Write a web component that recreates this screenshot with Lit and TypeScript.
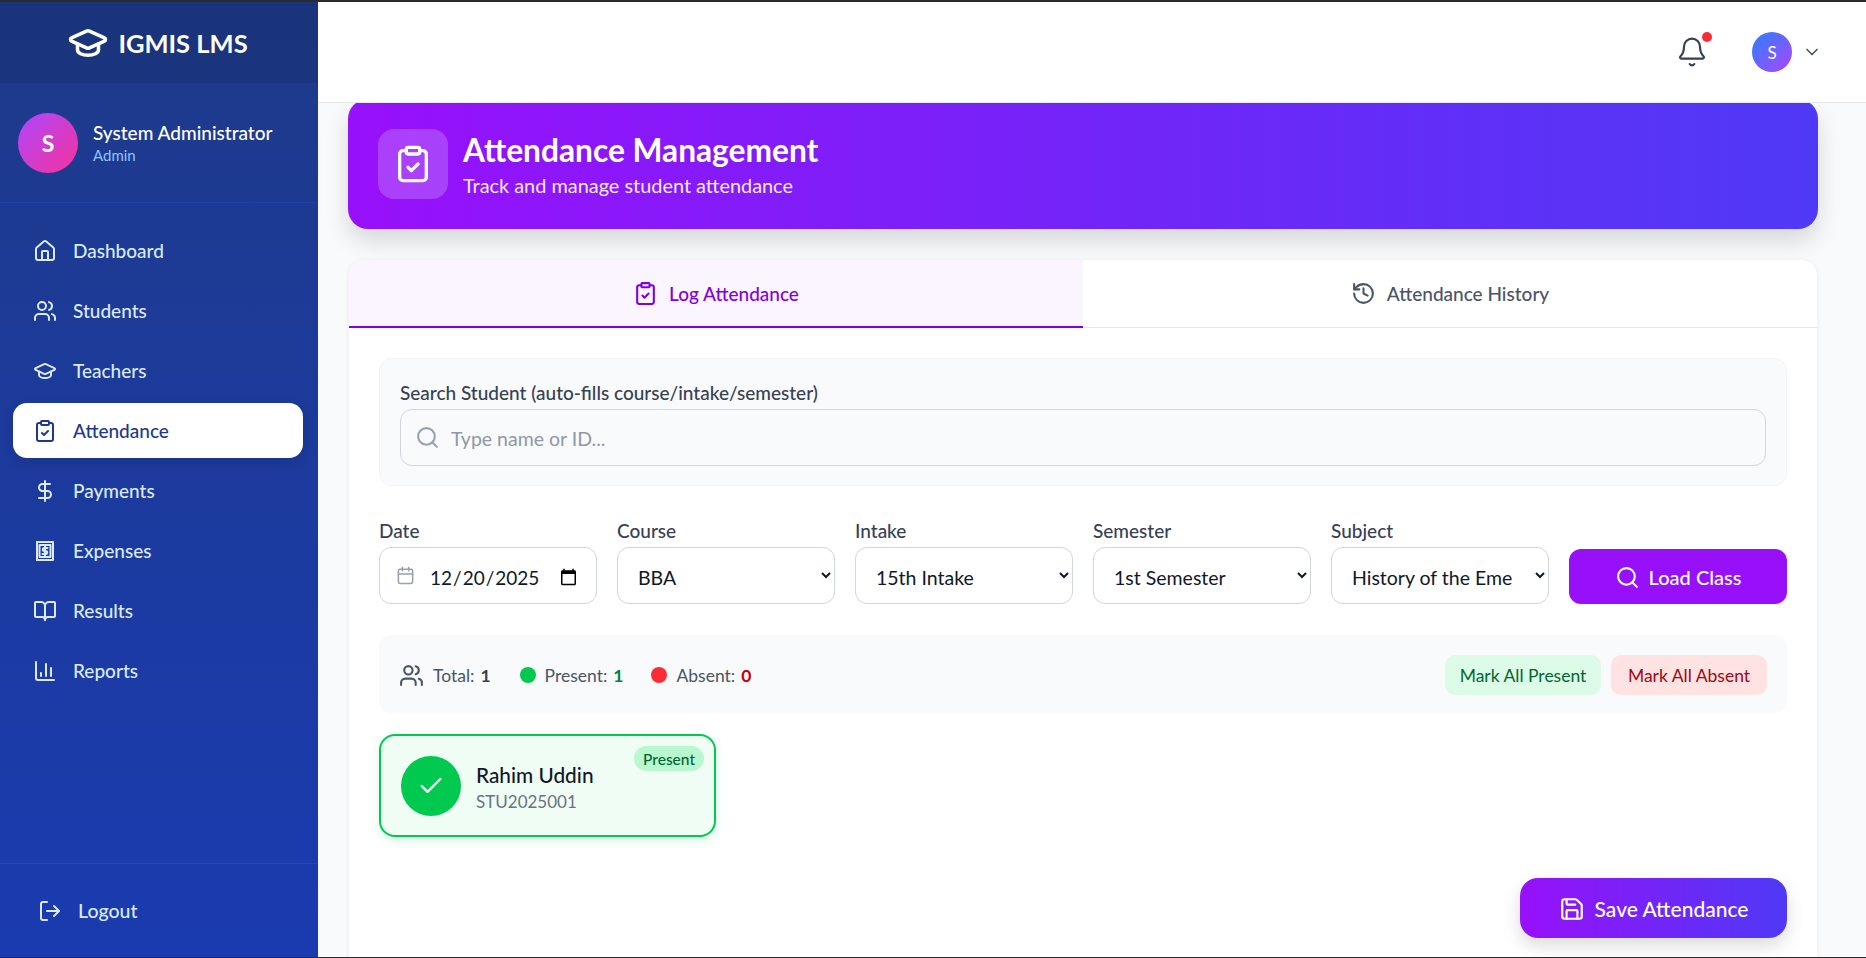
import { LitElement, html, css, svg } from 'lit';
import { customElement } from 'lit/decorators.js';

const ICONS: Record<string, unknown> = {
  house: svg`<path d="M15 21v-8a1 1 0 0 0-1-1h-4a1 1 0 0 0-1 1v8"/><path d="M3 10a2 2 0 0 1 .709-1.528l7-5.999a2 2 0 0 1 2.582 0l7 5.999A2 2 0 0 1 21 10v9a2 2 0 0 1-2 2H5a2 2 0 0 1-2-2z"/>`,
  users: svg`<path d="M16 21v-2a4 4 0 0 0-4-4H6a4 4 0 0 0-4 4v2"/><circle cx="9" cy="7" r="4"/><path d="M22 21v-2a4 4 0 0 0-3-3.87"/><path d="M16 3.13a4 4 0 0 1 0 7.75"/>`,
  cap: svg`<path d="M21.42 10.922a1 1 0 0 0-.019-1.838L12.83 5.18a2 2 0 0 0-1.66 0L2.6 9.08a1 1 0 0 0 0 1.832l8.57 3.908a2 2 0 0 0 1.66 0z"/><path d="M6 12.5V16a6 3 0 0 0 12 0v-3.5"/>`,
  clipboard: svg`<rect x="8" y="2" width="8" height="4" rx="1"/><path d="M16 4h2a2 2 0 0 1 2 2v14a2 2 0 0 1-2 2H6a2 2 0 0 1-2-2V6a2 2 0 0 1 2-2h2"/><path d="m9 14 2 2 4-4"/>`,
  dollar: svg`<line x1="12" x2="12" y1="2" y2="22"/><path d="M17 5H9.5a3.5 3.5 0 0 0 0 7h5a3.5 3.5 0 0 1 0 7H6"/>`,
  receipt: svg`<path d="M4 3v18M20 3v18"/><path d="M4 3h16M4 21h16" stroke-dasharray="1.5 1.2"/><rect x="6.5" y="6" width="11" height="12"/><path d="M14.5 9h-3.2a1.5 1.5 0 0 0 0 3h1.4a1.5 1.5 0 0 1 0 3H9.500M12 7.500v9"/>`,
  book: svg`<path d="M12 7v14"/><path d="M3 18a1 1 0 0 1-1-1V4a1 1 0 0 1 1-1h5a4 4 0 0 1 4 4 4 4 0 0 1 4-4h5a1 1 0 0 1 1 1v13a1 1 0 0 1-1 1h-6a3 3 0 0 0-3 3 3 3 0 0 0-3-3z"/>`,
  chart: svg`<path d="M3 3v16a2 2 0 0 0 2 2h16"/><path d="M18 17V9"/><path d="M13 17V5"/><path d="M8 17v-3"/>`,
  logout: svg`<path d="m16 17 5-5-5-5"/><path d="M21 12H9"/><path d="M9 21H5a2 2 0 0 1-2-2V5a2 2 0 0 1 2-2h4"/>`,
  bell: svg`<path d="M10.268 21a2 2 0 0 0 3.464 0"/><path d="M3.262 15.326A1 1 0 0 0 4 17h16a1 1 0 0 0 .74-1.673C19.41 13.956 18 12.499 18 8A6 6 0 0 0 6 8c0 4.499-1.411 5.956-2.738 7.326"/>`,
  chevron: svg`<path d="m6 9 6 6 6-6"/>`,
  history: svg`<path d="M3 12a9 9 0 1 0 9-9 9.750 9.750 0 0 0-6.740 2.740L3 8"/><path d="M3 3v5h5"/><path d="M12 7v5l4 2"/>`,
  search: svg`<circle cx="11" cy="11" r="8"/><path d="m21 21-4.300-4.300"/>`,
  calendar: svg`<path d="M8 2v4"/><path d="M16 2v4"/><rect x="3" y="4" width="18" height="18" rx="2"/><path d="M3 10h18"/>`,
  save: svg`<path d="M15.200 3a2 2 0 0 1 1.400.6l3.800 3.800a2 2 0 0 1 .6 1.400V19a2 2 0 0 1-2 2H5a2 2 0 0 1-2-2V5a2 2 0 0 1 2-2z"/><path d="M17 21v-7a1 1 0 0 0-1-1H8a1 1 0 0 0-1 1v7"/><path d="M7 3v4a1 1 0 0 0 1 1h7"/>`,
  check: svg`<path d="M20 6 9 17l-5-5"/>`,
};

const icon = (name: string, size: number, stroke = 2) => html`<svg
  width=${size}
  height=${size}
  viewBox="0 0 24 24"
  fill="none"
  stroke="currentColor"
  stroke-width=${stroke}
  stroke-linecap="round"
  stroke-linejoin="round"
>${ICONS[name]}</svg>`;

const NAV = [
  { name: 'Dashboard', icon: 'house' },
  { name: 'Students', icon: 'users' },
  { name: 'Teachers', icon: 'cap' },
  { name: 'Attendance', icon: 'clipboard', active: true },
  { name: 'Payments', icon: 'dollar' },
  { name: 'Expenses', icon: 'receipt' },
  { name: 'Results', icon: 'book' },
  { name: 'Reports', icon: 'chart' },
];

@customElement('app-root')
export class AppRoot extends LitElement {
  static styles = css`
    :host {
      display: flex;
      height: 958px;
      box-sizing: border-box;
      border-top: 2px solid #2b2b2b;
      border-bottom: 1px solid #2b2b2b;
      overflow: hidden;
      font-family: 'Lato', 'Noto Sans', sans-serif;
      background: #f9fafb;
    }
    * {
      box-sizing: border-box;
    }
    svg {
      flex: none;
      display: block;
    }

    .sidebar {
      width: 318px;
      flex: none;
      display: flex;
      flex-direction: column;
      background: linear-gradient(180deg, #1e3a8a, #1a3bb0);
      color: #fff;
    }
    .brand {
      height: 81px;
      display: flex;
      align-items: center;
      justify-content: center;
      gap: 9px;
      padding-right: 3px;
      background: rgba(0, 0, 0, 0.1);
      font-size: 25.5px;
      font-weight: 700;
    }
    .profile {
      height: 120px;
      display: flex;
      align-items: center;
      gap: 15px;
      padding: 0 18px;
      border-bottom: 1px solid #1e40af;
    }
    .profile .avatar {
      width: 60px;
      height: 60px;
      border-radius: 50%;
      background: linear-gradient(135deg, #ad46ff, #f6339a);
      display: flex;
      align-items: center;
      justify-content: center;
      font-size: 23px;
      font-weight: 700;
    }
    .profile .name {
      font-size: 19px;
      font-weight: 500;
      line-height: 24px;
    }
    .profile .role {
      font-size: 15px;
      line-height: 20px;
      color: #8ec5ff;
    }
    nav {
      flex: 1;
      display: flex;
      flex-direction: column;
      gap: 5px;
      padding: 20px 15px 20px 13px;
    }
    .item {
      height: 55px;
      display: flex;
      align-items: center;
      gap: 16px;
      padding: 0 20px;
      border-radius: 14px;
      font-size: 19px;
      font-weight: 500;
      color: #dbeafe;
    }
    .item.active {
      background: #fff;
      color: #1c398e;
      box-shadow: 0 4px 12px rgba(0, 0, 0, 0.12);
    }
    .logout {
      height: 94px;
      display: flex;
      align-items: center;
      gap: 16px;
      padding: 0 38px;
      border-top: 1px solid #1e4bb8;
      font-size: 19.5px;
      font-weight: 500;
      color: #dbeafe;
    }

    .main {
      flex: 1;
      min-width: 0;
      display: flex;
      flex-direction: column;
    }
    .topbar {
      height: 101px;
      flex: none;
      display: flex;
      align-items: center;
      justify-content: flex-end;
      padding-right: 44px;
      background: #fff;
      border-bottom: 1px solid #e5e7eb;
      position: relative;
      z-index: 2;
    }
    .bell {
      position: relative;
      color: #364153;
      margin-right: 44px;
    }
    .bell .dot {
      position: absolute;
      top: -4px;
      right: -4px;
      width: 10px;
      height: 10px;
      border-radius: 50%;
      background: #fb2c36;
    }
    .user-avatar {
      width: 40px;
      height: 40px;
      border-radius: 50%;
      background: linear-gradient(135deg, #2b7fff, #ad46ff);
      color: #fff;
      display: flex;
      align-items: center;
      justify-content: center;
      font-size: 17px;
    }
    .chevron {
      color: #4a5565;
      margin-left: 10px;
    }

    .content {
      flex: 1;
      min-height: 0;
      overflow: hidden;
      padding: 0 48px 0 30px;
    }
    .banner {
      margin-top: -4px;
      height: 130px;
      padding: 30px;
      display: flex;
      align-items: center;
      gap: 15px;
      color: #fff;
      border-radius: 20px;
      background: linear-gradient(90deg, #9810fa, #4f39f6);
      box-shadow: 0 12px 24px rgba(0, 0, 0, 0.14);
    }
    .banner .tile {
      width: 70px;
      height: 70px;
      border-radius: 16px;
      background: rgba(255, 255, 255, 0.2);
      display: flex;
      align-items: center;
      justify-content: center;
    }
    .banner h1 {
      margin: 1px 0 3px;
      font-size: 31.7px;
      line-height: 38px;
      font-weight: 700;
    }
    .banner p {
      margin: 0;
      font-size: 19.9px;
      line-height: 26px;
      color: #f3e8ff;
    }

    .card {
      margin-top: 30px;
      height: 800px;
      background: #fff;
      border-radius: 16px 16px 0 0;
      border: 1px solid #f3f4f6;
      box-shadow: 0 1px 4px rgba(0, 0, 0, 0.06);
      overflow: hidden;
    }
    .tabs {
      display: grid;
      grid-template-columns: 1fr 1fr;
      height: 68px;
      border-bottom: 1px solid #e5e7eb;
    }
    .tab {
      display: flex;
      align-items: center;
      justify-content: center;
      gap: 11px;
      font-size: 19px;
      font-weight: 500;
      color: #4a5565;
    }
    .tab.active {
      color: #8200db;
      background: #faf5ff;
      border-bottom: 2px solid #8200db;
      margin-bottom: -1px;
    }
    .body {
      padding: 30px;
    }
    .search-panel {
      height: 128px;
      padding: 21px 20px 0;
      background: #f9fafb;
      border: 1px solid #f3f4f6;
      border-radius: 12px;
    }
    label {
      display: block;
      font-size: 19px;
      font-weight: 500;
      line-height: 25px;
      margin-bottom: 4px;
      color: #364153;
    }
    .field {
      height: 57px;
      display: flex;
      align-items: center;
      border: 1px solid #d1d5dc;
      border-radius: 12px;
      background: #fff;
      padding: 0 20px;
      gap: 11px;
    }
    .search-panel .field {
      background: #f9fafb;
      padding: 0 14px;
      color: #99a1af;
    }
    .search-panel input {
      padding-top: 2px;
    }
    input,
    select {
      border: 0;
      outline: 0;
      background: transparent;
      font: inherit;
      font-size: 19.5px;
      color: #101828;
      width: 100%;
      min-width: 0;
      padding: 0;
    }
    input::placeholder {
      color: #8f98a6;
    }
    select {
      height: 100%;
      padding: 3px 20px 0 16px;
    }
    .filters {
      margin-top: 32px;
      display: grid;
      grid-template-columns: repeat(6, minmax(0, 1fr));
      gap: 20px;
      align-items: end;
    }
    .filters .select-field {
      padding: 0;
    }
    .filters .date-field {
      color: #99a1af;
      padding: 0 16px;
      gap: 14px;
    }
    .date-field input {
      font-size: 19px;
      padding-top: 3px;
    }
    .load {
      height: 55px;
      padding-top: 1px;
      border-radius: 12px;
      background: #9810fa;
      color: #fff;
      display: flex;
      align-items: center;
      justify-content: center;
      gap: 9px;
      font-size: 20px;
      font-weight: 500;
    }
    .stats {
      margin-top: 31px;
      height: 78px;
      padding: 2px 20px 0;
      display: flex;
      align-items: center;
      background: #f9fafb;
      border-radius: 12px;
      font-size: 17.5px;
      color: #4a5565;
    }
    .stat {
      display: flex;
      align-items: center;
      gap: 6px;
      margin-right: 28px;
    }
    .stat svg {
      margin-right: 3px;
    }
    .stat b {
      font-weight: 700;
      color: #364153;
    }
    .stat .swatch {
      width: 16px;
      height: 16px;
      border-radius: 50%;
      margin-right: 3px;
    }
    .stat:first-child {
      margin-right: 29px;
    }
    .green {
      background: #00c950;
    }
    .red {
      background: #fb2c36;
    }
    .stat b.t-green {
      color: #008236;
    }
    .stat b.t-red {
      color: #c10007;
    }
    .marks {
      margin-left: auto;
      display: flex;
      gap: 10px;
    }
    .mark {
      width: 156px;
      height: 40px;
      border-radius: 10px;
      display: flex;
      align-items: center;
      justify-content: center;
      font-size: 17.5px;
    }
    .mark.p {
      background: #dcfce7;
      color: #016630;
    }
    .mark.a {
      background: #ffe2e2;
      color: #9f0712;
    }
    .student {
      position: relative;
      margin-top: 21px;
      width: 337px;
      height: 103px;
      padding: 0 20px;
      display: flex;
      align-items: center;
      gap: 15px;
      background: #f0fdf4;
      border: 2px solid #00c950;
      border-radius: 16px;
      box-shadow: 0 4px 10px rgba(0, 201, 80, 0.16);
    }
    .student .mark-circle {
      width: 60px;
      height: 60px;
      border-radius: 50%;
      background: #00c950;
      color: #fff;
      display: flex;
      align-items: center;
      justify-content: center;
    }
    .student .info {
      padding-top: 4px;
    }
    .student .sname {
      font-size: 20.8px;
      font-weight: 500;
      line-height: 28px;
      color: #101828;
    }
    .student .sid {
      font-size: 17px;
      line-height: 26px;
      color: #6a7282;
    }
    .badge {
      position: absolute;
      top: 10px;
      right: 10px;
      height: 25px;
      padding: 0 9px;
      border-radius: 13px;
      background: #b9f8cf;
      color: #016630;
      font-size: 15.5px;
      font-weight: 500;
      display: flex;
      align-items: center;
    }
    .actions {
      display: flex;
      justify-content: flex-end;
      margin-top: 41px;
    }
    .save {
      width: 267px;
      height: 60px;
      padding-top: 1px;
      border-radius: 18px;
      color: #fff;
      background: linear-gradient(90deg, #9810fa, #4f39f6);
      box-shadow: 0 8px 18px rgba(0, 0, 0, 0.14);
      display: flex;
      align-items: center;
      justify-content: center;
      gap: 10px;
      font-size: 21px;
      font-weight: 500;
    }
  `;

  render() {
    return html`
      <aside class="sidebar">
        <div class="brand">${icon('cap', 42)}<span>IGMIS LMS</span></div>
        <div class="profile">
          <div class="avatar">S</div>
          <div>
            <div class="name">System Administrator</div>
            <div class="role">Admin</div>
          </div>
        </div>
        <nav>
          ${NAV.map(
            (n) => html`<div class="item ${n.active ? 'active' : ''}">
              ${icon(n.icon, 24)}<span>${n.name}</span>
            </div>`
          )}
        </nav>
        <div class="logout">${icon('logout', 24)}<span>Logout</span></div>
      </aside>
      <div class="main">
        <header class="topbar">
          <div class="bell">${icon('bell', 32, 1.6)}<span class="dot"></span></div>
          <div class="user-avatar">S</div>
          <div class="chevron">${icon('chevron', 20)}</div>
        </header>
        <div class="content">
          <section class="banner">
            <div class="tile">${icon('clipboard', 40)}</div>
            <div>
              <h1>Attendance Management</h1>
              <p>Track and manage student attendance</p>
            </div>
          </section>
          <section class="card">
            <div class="tabs">
              <div class="tab active">${icon('clipboard', 25)}<span>Log Attendance</span></div>
              <div class="tab">${icon('history', 25)}<span>Attendance History</span></div>
            </div>
            <div class="body">
              <div class="search-panel">
                <label>Search Student (auto-fills course/intake/semester)</label>
                <div class="field">
                  ${icon('search', 25)}
                  <input type="text" placeholder="Type name or ID..." />
                </div>
              </div>
              <div class="filters">
                <div>
                  <label>Date</label>
                  <div class="field date-field">
                    ${icon('calendar', 19)}
                    <input type="date" value="2025-12-20" />
                  </div>
                </div>
                <div>
                  <label>Course</label>
                  <div class="field select-field"><select><option>BBA</option></select></div>
                </div>
                <div>
                  <label>Intake</label>
                  <div class="field select-field"><select><option>15th Intake</option></select></div>
                </div>
                <div>
                  <label>Semester</label>
                  <div class="field select-field"><select><option>1st Semester</option></select></div>
                </div>
                <div>
                  <label>Subject</label>
                  <div class="field select-field">
                    <select><option>History of the Emergence of Bangladesh</option></select>
                  </div>
                </div>
                <div class="load">${icon('search', 25)}<span>Load Class</span></div>
              </div>
              <div class="stats">
                <div class="stat">${icon('users', 25)}<span>Total:</span><b>1</b></div>
                <div class="stat"><i class="swatch green"></i><span>Present:</span><b class="t-green">1</b></div>
                <div class="stat"><i class="swatch red"></i><span>Absent:</span><b class="t-red">0</b></div>
                <div class="marks">
                  <div class="mark p">Mark All Present</div>
                  <div class="mark a">Mark All Absent</div>
                </div>
              </div>
              <div class="student">
                <div class="mark-circle">${icon('check', 28)}</div>
                <div class="info">
                  <div class="sname">Rahim Uddin</div>
                  <div class="sid">STU2025001</div>
                </div>
                <span class="badge">Present</span>
              </div>
              <div class="actions">
                <div class="save">${icon('save', 26)}<span>Save Attendance</span></div>
              </div>
            </div>
          </section>
        </div>
      </div>
    `;
  }
}
